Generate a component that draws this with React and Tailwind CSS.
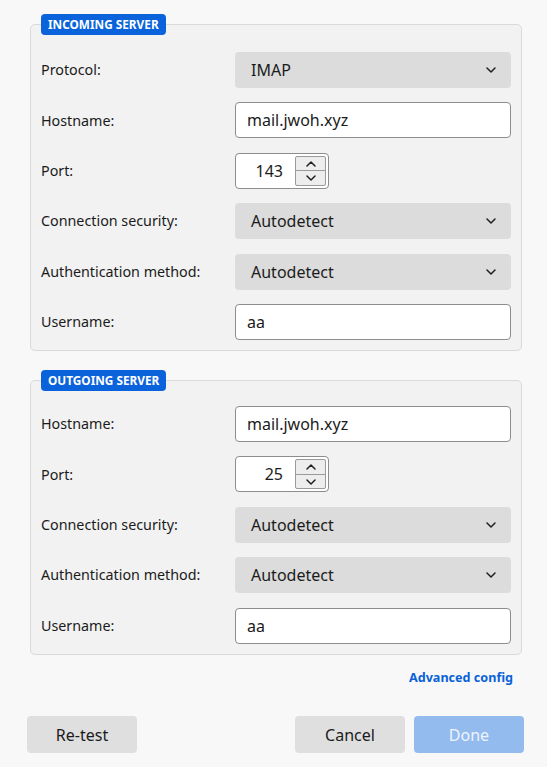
import React from "react";

const font = { fontFamily: '"Noto Sans", "Open Sans", sans-serif' };

function Chevron({ up = false, className = "" }) {
  return (
    <svg width="10" height="6" viewBox="0 0 10 6" className={className}>
      <path
        d={up ? "M1 5 L5 1 L9 5" : "M1 1 L5 5 L9 1"}
        fill="none"
        stroke="#1f1f1f"
        strokeWidth="1.5"
        strokeLinecap="round"
        strokeLinejoin="round"
      />
    </svg>
  );
}

function Select({ value }) {
  return (
    <div className="flex h-[36px] w-full items-center justify-between rounded-[4px] bg-[#dcdcdc] pl-[16px] pr-[15px] text-[16px] text-[#1b1b1b]">
      <span>{value}</span>
      <Chevron />
    </div>
  );
}

function TextInput({ value }) {
  return (
    <div className="flex h-[36px] w-full items-center rounded-[4px] border border-[#8d8d8d] bg-white pl-[11px] text-[16px] text-[#1b1b1b]">
      {value}
    </div>
  );
}

function Port({ value }) {
  return (
    <div className="flex h-[36px] w-[94px] items-center rounded-[4px] border border-[#8d8d8d] bg-white pr-[2px]">
      <div className="flex-1 pr-[12px] text-right text-[16px] text-[#1b1b1b]">{value}</div>
      <div className="flex h-[30px] w-[31px] flex-col rounded-[2px] border border-[#9a9a9a] bg-[#ededed]">
        <div className="flex flex-1 items-center justify-center border-b border-[#9a9a9a]">
          <Chevron up />
        </div>
        <div className="flex flex-1 items-center justify-center">
          <Chevron />
        </div>
      </div>
    </div>
  );
}

function Row({ label, children }) {
  return (
    <div className="flex h-[36px] items-center">
      <div className="w-[194px] text-[14.3px] text-[#1b1b1b]">{label}</div>
      <div className="flex flex-1">{children}</div>
    </div>
  );
}

function Group({ title, children, ptop }) {
  return (
    <div className="relative rounded-[5px] border border-[#dadada] bg-[#f2f2f2] pb-[10px] pl-[10px] pr-[10px]">
      <div className="absolute left-[10px] top-[-11px] rounded-[4px] bg-[#0b63dc] px-[7px] py-[2px] text-[11.8px] font-bold leading-[17px] text-white">
        {title}
      </div>
      <div className={`flex flex-col gap-[14.4px] ${ptop}`}>{children}</div>
    </div>
  );
}

export default function App() {
  return (
    <div style={font} className="min-h-[767px] w-[547px] bg-[#f8f8f8] pt-[24px]">
      <div className="ml-[30px] w-[492px]">
        <Group title="INCOMING SERVER" ptop="pt-[27px]">
          <Row label="Protocol:">
            <Select value="IMAP" />
          </Row>
          <Row label="Hostname:">
            <TextInput value="mail.jwoh.xyz" />
          </Row>
          <Row label="Port:">
            <Port value="143" />
          </Row>
          <Row label="Connection security:">
            <Select value="Autodetect" />
          </Row>
          <Row label="Authentication method:">
            <Select value="Autodetect" />
          </Row>
          <Row label="Username:">
            <TextInput value="aa" />
          </Row>
        </Group>
        <div className="h-[29px]" />
        <Group title="OUTGOING SERVER" ptop="pt-[25px]">
          <Row label="Hostname:">
            <TextInput value="mail.jwoh.xyz" />
          </Row>
          <Row label="Port:">
            <Port value="25" />
          </Row>
          <Row label="Connection security:">
            <Select value="Autodetect" />
          </Row>
          <Row label="Authentication method:">
            <Select value="Autodetect" />
          </Row>
          <Row label="Username:">
            <TextInput value="aa" />
          </Row>
        </Group>
      </div>
      <div className="mr-[34px] mt-[14px] flex justify-end">
        <span className="text-[12.6px] font-bold text-[#0a62d9]">Advanced config</span>
      </div>
      <div className="mt-[29px] flex items-center pl-[27px] pr-[23px]">
        <button className="h-[37px] w-[110px] rounded-[4px] bg-[#dfdfdf] text-[16px] text-[#1b1b1b]">
          Re-test
        </button>
        <div className="flex-1" />
        <button className="h-[37px] w-[110px] rounded-[4px] bg-[#dfdfdf] text-[16px] text-[#1b1b1b]">
          Cancel
        </button>
        <button className="ml-[9px] h-[37px] w-[110px] rounded-[4px] bg-[#93bbee] text-[16px] text-[#eef4fc]">
          Done
        </button>
      </div>
    </div>
  );
}
